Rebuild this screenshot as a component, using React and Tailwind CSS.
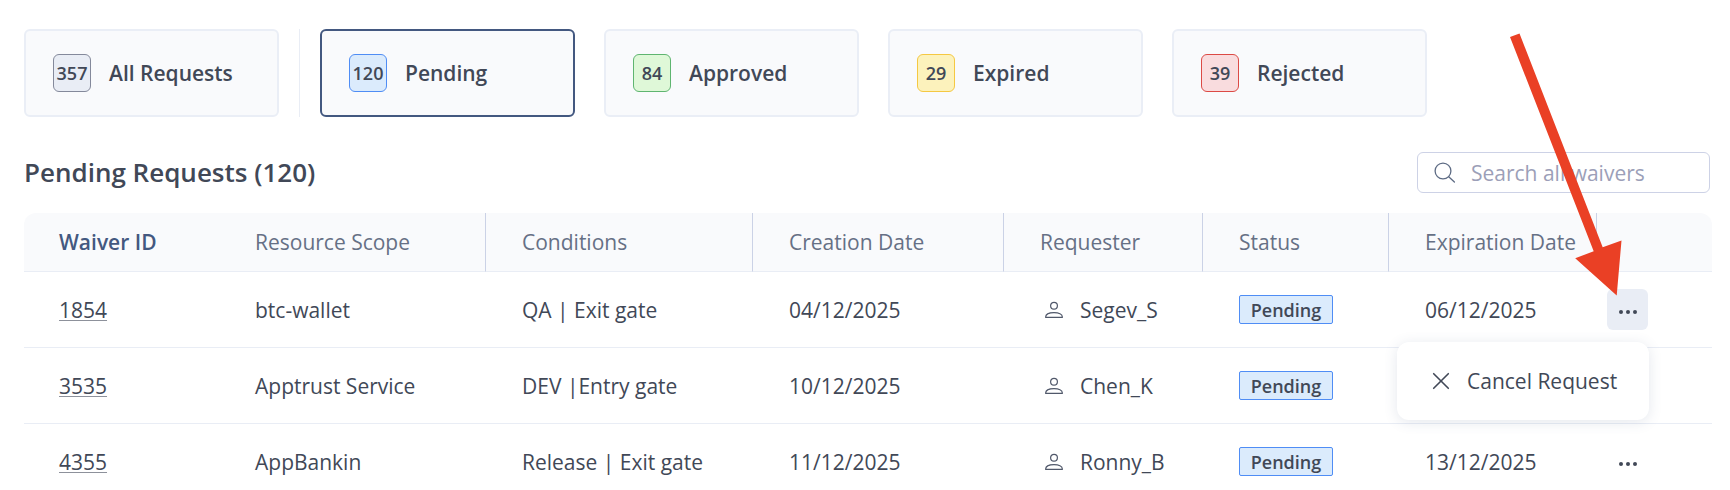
import React from "react";

const TABS = [
  { label: "Pending", count: 120, badge: "border-[#4f8df5] bg-[#dbebfc]", active: true },
  { label: "Approved", count: 84, badge: "border-[#5fb570] bg-[#dff8d8]" },
  { label: "Expired", count: 29, badge: "border-[#f5c842] bg-[#fcf2bc]" },
  { label: "Rejected", count: 39, badge: "border-[#dc4a45] bg-[#f9dcde]" },
];

const ROWS = [
  { id: "1854", scope: "btc-wallet", conditions: "QA | Exit gate", created: "04/12/2025", requester: "Segev_S", expires: "06/12/2025", open: true },
  { id: "3535", scope: "Apptrust Service", conditions: "DEV |Entry gate", created: "10/12/2025", requester: "Chen_K", expires: "" },
  { id: "4355", scope: "AppBankin", conditions: "Release | Exit gate", created: "11/12/2025", requester: "Ronny_B", expires: "13/12/2025" },
];

const COLUMNS = ["Resource Scope", "Conditions", "Creation Date", "Requester", "Status", "Expiration Date"];

function StatusCard({ label, count, badge, active }) {
  return (
    <button
      type="button"
      aria-pressed={!!active}
      className={`flex h-[88px] w-[255px] items-center gap-[18px] rounded-md border-2 bg-[#f9fafc] pl-[27px] text-left ${active ? "border-[#435880]" : "border-[#eaeef6]"}`}
    >
      <span className={`flex size-[38px] items-center justify-center rounded-md border text-[18px] leading-6 font-semibold ${badge}`}>{count}</span>
      <span className="text-[21px] leading-7 font-semibold">{label}</span>
    </button>
  );
}

function PersonIcon() {
  return (
    <svg width="20" height="20" viewBox="0 0 20 20" fill="none" stroke="#50586a" strokeWidth="1.2" aria-hidden="true">
      <circle cx="10" cy="5.7" r="3.4" />
      <path d="M1.7 17.4v-.6c0-2.6 3.5-4.2 8.3-4.2s8.3 1.6 8.3 4.2v.6z" strokeLinejoin="round" />
    </svg>
  );
}

function ActionMenu() {
  return (
    <div role="menu" className="absolute top-[53px] -right-px z-10 w-[252px] rounded-xl bg-white py-[19px] shadow-[0_2px_14px_rgba(67,88,128,0.14)]">
      <button type="button" role="menuitem" className="flex h-10 w-full items-center gap-[17px] pl-[35px] whitespace-nowrap">
        <svg width="18" height="18" viewBox="0 0 18 18" stroke="#414857" strokeWidth="1.6" strokeLinecap="round" aria-hidden="true">
          <path d="M1.7 1.7 16.3 16.3M16.3 1.7 1.7 16.3" />
        </svg>
        Cancel Request
      </button>
    </div>
  );
}

function PointerArrow() {
  return (
    <svg className="pointer-events-none absolute -top-[259px] -left-[107px] z-20" width="130" height="270" viewBox="0 0 130 270" aria-hidden="true">
      <path d="M10 7 19.5 3.5 102.7 217.3 121.5 210.5 116.7 265.5 75.2 228.3 93.7 221.2z" fill="#ea4025" />
    </svg>
  );
}

export default function App() {
  return (
    <main className="h-screen overflow-hidden bg-white pt-[29px] pr-[18px] pl-6 font-['Open_Sans',sans-serif] text-[21px] leading-7 text-[#414857]">
      <nav aria-label="Request status" className="flex">
        <StatusCard label="All Requests" count={357} badge="border-[#84899b] bg-[#e9edf5]" />
        <div className="mx-5 w-px bg-[#e9edf5]" />
        <div className="flex gap-[29px]">
          {TABS.map((tab) => (
            <StatusCard key={tab.label} {...tab} />
          ))}
        </div>
      </nav>

      <header className="mt-[35px] mr-0.5 flex items-center justify-between">
        <h1 className="pb-0.5 text-[26px] leading-9 font-semibold">Pending Requests (120)</h1>
        <label className="flex h-[41px] w-[293px] items-center gap-[15px] rounded-md border border-[#cdd2e6] pl-4">
          <svg className="shrink-0" width="22" height="22" viewBox="0 0 22 22" fill="none" stroke="#5d6b84" strokeWidth="1.3" strokeLinecap="round" aria-hidden="true">
            <circle cx="9" cy="9" r="7.9" />
            <path d="m14.7 14.7 5.7 5.3" />
          </svg>
          <input type="search" aria-label="Search all waivers" placeholder="Search all waivers" className="w-full min-w-0 bg-transparent outline-none placeholder:text-[#9c9fb8]" />
        </label>
      </header>

      <table className="mt-5 w-full table-fixed border-separate border-spacing-0 text-left">
        <colgroup>
          <col className="w-[195px]" />
          <col className="w-[267px]" />
          <col className="w-[267px]" />
          <col className="w-[251px]" />
          <col className="w-[199px]" />
          <col className="w-[186px]" />
          <col className="w-[208px]" />
          <col className="w-[115px]" />
        </colgroup>
        <thead>
          <tr className="h-[59px] text-[#667085]">
            <th scope="col" className="rounded-tl-xl border-b border-[#e9edf5] bg-[#f9fafc] pl-[35px] font-semibold text-[#435880]">Waiver ID</th>
            {COLUMNS.map((column, index) => (
              <th key={column} scope="col" className="border-r border-b border-r-[#cbd2e6] border-b-[#e9edf5] bg-[#f9fafc] pl-9 font-normal">
                {column}
              </th>
            ))}
            <th scope="col" aria-label="Actions" className="rounded-tr-xl border-b border-[#e9edf5] bg-[#f9fafc]" />
          </tr>
        </thead>
        <tbody>
          {ROWS.map((row) => (
            <tr key={row.id} className="h-[76px] *:border-b *:border-[#e9edf5] *:pl-9">
              <td className="pl-[35px]!">
                <a href={`#${row.id}`} className="underline decoration-[#8d919b] decoration-1 underline-offset-2">{row.id}</a>
              </td>
              <td>{row.scope}</td>
              <td>{row.conditions}</td>
              <td>{row.created}</td>
              <td>
                <span className="flex items-center gap-4 pl-1">
                  <PersonIcon />
                  {row.requester}
                </span>
              </td>
              <td>
                <span className="flex h-[29px] w-[94px] items-center justify-center rounded-xs border border-[#4f8df5] bg-[#dbebfc] text-[18px] leading-6 font-semibold">Pending</span>
              </td>
              <td>{row.expires}</td>
              <td className="pl-2.5!">
                <div className="relative w-[41px]">
                  <button
                    type="button"
                    aria-label={`Actions for ${row.id}`}
                    aria-haspopup="menu"
                    aria-expanded={!!row.open}
                    className={`flex size-[41px] items-center justify-center rounded-md ${row.open ? "bg-[#e9edf5]" : ""}`}
                  >
                    <svg width="20" height="6" viewBox="0 0 20 6" fill="#414857" className="mt-1" aria-hidden="true">
                      <circle cx="3" cy="3" r="2" />
                      <circle cx="10" cy="3" r="2" />
                      <circle cx="17" cy="3" r="2" />
                    </svg>
                  </button>
                  {row.open && <ActionMenu />}
                  {row.open && <PointerArrow />}
                </div>
              </td>
            </tr>
          ))}
        </tbody>
      </table>
    </main>
  );
}
